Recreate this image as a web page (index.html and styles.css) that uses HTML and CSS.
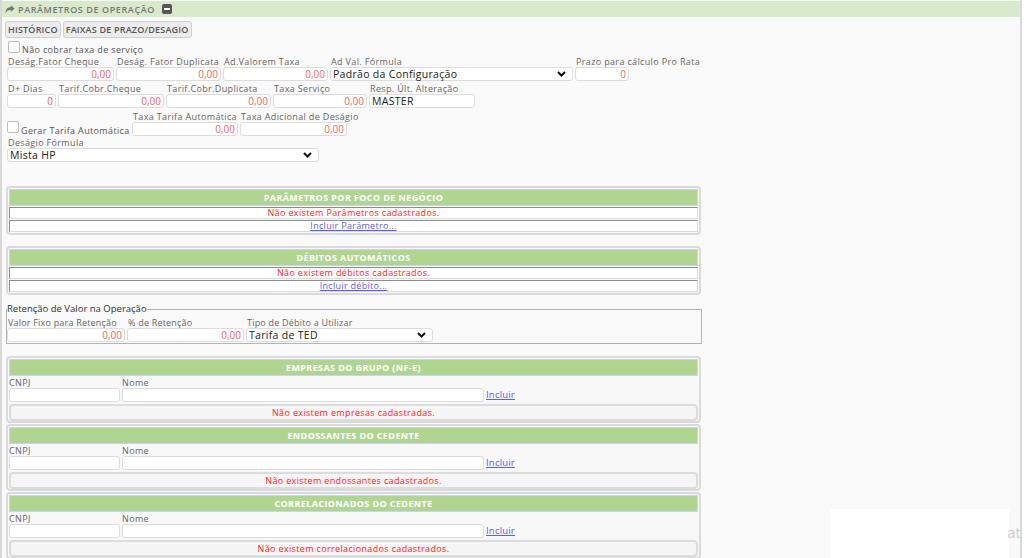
FILE: index.html
```html
<!DOCTYPE html>
<html lang="pt-BR">
<head>
<meta charset="utf-8">
<title>Parâmetros de Operação</title>
<link rel="stylesheet" href="styles.css">
</head>
<body>
<div class="page">
  <div class="topbar">
    <svg class="share" width="10" height="9" viewBox="0 0 10 9"><path d="M9.6 3.6 L5.8 0.3 V2.1 C2.6 2.2 0.6 4.2 0.6 8.4 C1.6 6.2 3.2 5.1 5.8 5.1 V6.9 Z" fill="#777"/></svg>
    <span class="title">PARÂMETROS DE OPERAÇÃO</span>
    <svg class="minus" width="10" height="10" viewBox="0 0 10 10"><rect x="0" y="0" width="10" height="10" rx="2" fill="#555"/><rect x="2" y="4" width="6" height="2" fill="#fff"/></svg>
  </div>

  <div class="tabs">
    <button class="tab">HISTÓRICO</button>
    <button class="tab">FAIXAS DE PRAZO/DESAGIO</button>
  </div>

  <div class="form">
    <div class="checkrow">
      <span class="cb"></span><span class="cblabel">Não cobrar taxa de serviço</span>
    </div>

    <div class="row row1">
      <div class="field"><span class="lbl">Deság.Fator Cheque</span><input class="num" value="0,00"></div>
      <div class="field"><span class="lbl">Deság. Fator Duplicata</span><input class="num" value="0,00"></div>
      <div class="field"><span class="lbl">Ad.Valorem Taxa</span><input class="num" value="0,00"></div>
      <div class="field"><span class="lbl">Ad Val. Fórmula</span>
        <div class="select"><span>Padrão da Configuração</span><svg class="chev" width="9" height="6" viewBox="0 0 9 6"><path d="M1 1 L4.5 4.5 L8 1" fill="none" stroke="#111" stroke-width="2"/></svg></div>
      </div>
      <div class="field"><span class="lbl">Prazo para cálculo Pro Rata</span><input class="num short" value="0"></div>
    </div>

    <div class="row row2">
      <div class="field"><span class="lbl">D+ Dias</span><input class="num" value="0"></div>
      <div class="field"><span class="lbl">Tarif.Cobr.Cheque</span><input class="num" value="0,00"></div>
      <div class="field"><span class="lbl">Tarif.Cobr.Duplicata</span><input class="num" value="0,00"></div>
      <div class="field"><span class="lbl">Taxa Serviço</span><input class="num" value="0,00"></div>
      <div class="field"><span class="lbl">Resp. Últ. Alteração</span><input class="txt" value="MASTER"></div>
    </div>

    <div class="row row3">
      <div class="checkcell"><span class="cb"></span><span class="cblabel">Gerar Tarifa Automática</span></div>
      <div class="field"><span class="lbl">Taxa Tarifa Automática</span><input class="num" value="0,00"></div>
      <div class="field"><span class="lbl">Taxa Adicional de Deságio</span><input class="num" value="0,00"></div>
    </div>

    <div class="row row4">
      <div class="field"><span class="lbl">Deságio Fórmula</span>
        <div class="select"><span>Mista HP</span><svg class="chev" width="9" height="6" viewBox="0 0 9 6"><path d="M1 1 L4.5 4.5 L8 1" fill="none" stroke="#111" stroke-width="2"/></svg></div>
      </div>
    </div>
  </div>

  <div class="box box-first">
    <div class="bhead">PARÂMETROS POR FOCO DE NEGÓCIO</div>
    <div class="cell msg">Não existem Parâmetros cadastrados.</div>
    <div class="cell"><a class="link" href="#">Incluir Parâmetro...</a></div>
  </div>

  <div class="box box-second">
    <div class="bhead">DÉBITOS AUTOMÁTICOS</div>
    <div class="cell msg">Não existem débitos cadastrados.</div>
    <div class="cell"><a class="link" href="#">Incluir débito...</a></div>
  </div>

  <fieldset class="ret">
    <legend>Retenção de Valor na Operação</legend>
    <div class="row rowret">
      <div class="field"><span class="lbl">Valor Fixo para Retenção</span><input class="num" value="0,00"></div>
      <div class="field"><span class="lbl">% de Retenção</span><input class="num" value="0,00"></div>
      <div class="field"><span class="lbl">Tipo de Débito a Utilizar</span>
        <div class="select"><span>Tarifa de TED</span><svg class="chev" width="9" height="6" viewBox="0 0 9 6"><path d="M1 1 L4.5 4.5 L8 1" fill="none" stroke="#111" stroke-width="2"/></svg></div>
      </div>
    </div>
  </fieldset>

  <div class="box gbox gfirst">
    <div class="bhead">EMPRESAS DO GRUPO (NF-E)</div>
    <div class="grow">
      <div class="field"><span class="lbl">CNPJ</span><input class="txt"></div>
      <div class="field"><span class="lbl">Nome</span><input class="txt"></div>
      <a class="link inc" href="#">Incluir</a>
    </div>
    <div class="note">Não existem empresas cadastradas.</div>
  </div>

  <div class="box gbox">
    <div class="bhead">ENDOSSANTES DO CEDENTE</div>
    <div class="grow">
      <div class="field"><span class="lbl">CNPJ</span><input class="txt"></div>
      <div class="field"><span class="lbl">Nome</span><input class="txt"></div>
      <a class="link inc" href="#">Incluir</a>
    </div>
    <div class="note">Não existem endossantes cadastrados.</div>
  </div>

  <div class="box gbox">
    <div class="bhead">CORRELACIONADOS DO CEDENTE</div>
    <div class="grow">
      <div class="field"><span class="lbl">CNPJ</span><input class="txt"></div>
      <div class="field"><span class="lbl">Nome</span><input class="txt"></div>
      <a class="link inc" href="#">Incluir</a>
    </div>
    <div class="note">Não existem correlacionados cadastrados.</div>
  </div>

  <div class="overlay-white"></div>
  <span class="watermark">ativar</span>
</div>
</body>
</html>
```

FILE: styles.css
```css
* { box-sizing: border-box; }

body {
  margin: 0;
  background: #fff;
  font-family: "Open Sans", "Liberation Sans", sans-serif;
  font-size: 9px;
  color: #666;
}

.page {
  position: relative;
  width: 1022px;
  height: 558px;
  overflow: hidden;
  background: #f9f9f9;
  border-left: 2px solid #d8d8d8;
  border-right: 2px solid #d8d8d8;
  padding-top: 1px;
}

.topbar {
  height: 16px;
  background: #d9eacc;
  display: flex;
  align-items: center;
  padding-left: 3px;
}
.share { margin-right: 3px; }
.title {
  color: #777;
  font-weight: 600;
  font-size: 9px;
  letter-spacing: 0.6px;
  margin-right: 7px;
}

.tabs {
  display: flex;
  gap: 2px;
  margin-top: 4px;
  padding-left: 3px;
}
.tab {
  height: 17px;
  padding: 0 2px;
  background: #ececec;
  border: 1px solid #cfcfcf;
  border-radius: 3px;
  font-family: "Open Sans", sans-serif;
  font-size: 9px;
  font-weight: 600;
  letter-spacing: 0.2px;
  color: #555;
}

.form { padding-left: 5px; }

.checkrow {
  display: flex;
  align-items: flex-end;
  margin-top: 2px;
  height: 13px;
  padding-left: 1px;
}
.cb {
  display: inline-block;
  width: 12px;
  height: 12px;
  background: #fff;
  border: 1px solid #bdbdbd;
  border-radius: 2px;
  flex: none;
}
.cblabel {
  color: #555;
  font-size: 9px;
  letter-spacing: 0.35px;
  line-height: 10px;
  margin-left: 2px;
  margin-bottom: -2px;
  white-space: nowrap;
}

.row { display: grid; column-gap: 2px; align-items: end; }
.row1 { margin-top: 4px; grid-template-columns: 107px 105px 105px 243px auto; }
.row2 { margin-top: 3px; grid-template-columns: 49px 106px 105px 94px 106px; }
.row3 { margin-top: 4px; grid-template-columns: 123px 106px 107px; }
.row4 { margin-top: 2px; grid-template-columns: 312px; }
.rowret { grid-template-columns: 118px 117px 187px; }
.rowret .lbl { letter-spacing: 0.2px; }

.field { display: flex; flex-direction: column; min-width: 0; }
.lbl {
  display: block;
  font-size: 9px;
  line-height: 10px;
  color: #666;
  padding-left: 1px;
  letter-spacing: 0.35px;
  white-space: nowrap;
}

input {
  display: block;
  width: 100%;
  height: 14px;
  margin: 0;
  padding: 0 2px;
  background: #fff;
  border: 1px solid #dcdcdc;
  border-radius: 3px;
  font-family: "Open Sans", sans-serif;
  outline: none;
}
input.num {
  text-align: right;
  font-size: 10px;
  color: #f56565;
}
input.short { width: 54px; }
input.txt {
  font-size: 10.5px;
  color: #222;
  letter-spacing: 0.3px;
}

.checkcell {
  display: flex;
  align-items: flex-end;
  height: 14px;
  margin-bottom: 1px;
}
.checkcell .cb { margin-bottom: 2px; }
.checkcell .cblabel { margin-bottom: -1px; }

.select {
  display: flex;
  align-items: center;
  justify-content: space-between;
  height: 14px;
  background: #fff;
  border: 1px solid #dcdcdc;
  border-radius: 3px;
  padding: 0 6px 0 2px;
  font-size: 10.5px;
  color: #222;
  letter-spacing: 0.3px;
  white-space: nowrap;
}
.chev { flex: none; }

.box {
  width: 695px;
  margin-left: 4px;
  border: 2px solid #dadada;
  border-radius: 4px;
  padding: 1px 1px 1px;
  background: #f8f8f8;
}
.box-first { margin-top: 24px; }
.box-second { margin-top: 11px; }

.bhead {
  height: 17px;
  background: #b0d591;
  border: 1px solid #cdd1f2;
  color: #fff;
  font-weight: 700;
  font-size: 9px;
  letter-spacing: 0.4px;
  text-align: center;
  line-height: 15px;
}

.cell {
  height: 12px;
  margin-top: 1px;
  background: #fff;
  border: 1px solid;
  border-color: #8c8c8c #dcdcdc #dcdcdc #8c8c8c;
  text-align: center;
  line-height: 10px;
  font-size: 9px;
}
.msg { color: #ff1f1f; letter-spacing: 0.35px; }
.link {
  color: #5b5bff;
  text-decoration: underline;
  font-size: 9px;
  letter-spacing: 0.3px;
}

.ret {
  width: 696px;
  margin: 8px 0 0 4px;
  padding: 0 0 1px;
  border: 1px solid #b4b4b4;
  min-width: 0;
}
.ret legend {
  padding: 0;
  margin-left: 0;
  font-size: 9.5px;
  line-height: 12px;
  color: #333;
  letter-spacing: 0;
}
.ret .rowret { margin-top: 3px; }

.gbox { margin-top: 1px; padding-bottom: 0; }
.gfirst { margin-top: 12px; }

.grow {
  display: grid;
  grid-template-columns: 111px 362px auto;
  column-gap: 2px;
  align-items: end;
  margin-top: 2px;
}
.grow .lbl { margin-left: -1px; }
.inc { font-size: 9.5px; letter-spacing: 0.2px; margin-bottom: 1px; justify-self: start; }

.note {
  height: 17px;
  margin-top: 2px;
  background: #f5f5f5;
  border: 2px solid #dcdcdc;
  border-radius: 4px;
  color: #ff2525;
  text-align: center;
  font-size: 9px;
  line-height: 13px;
  letter-spacing: 0.35px;
}

.overlay-white {
  position: absolute;
  left: 828px;
  top: 509px;
  width: 179px;
  height: 60px;
  background: #fff;
}
.watermark {
  position: absolute;
  left: 1005px;
  top: 525px;
  font-family: "DejaVu Sans", sans-serif;
  font-size: 14px;
  color: #cfcfcf;
}
```
